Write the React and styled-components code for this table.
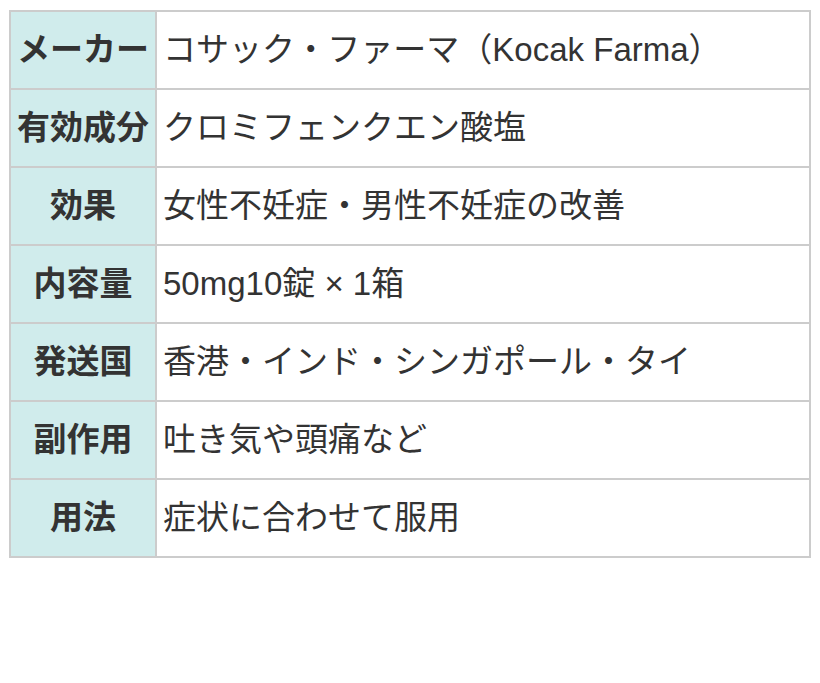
import React from 'react';
import styled, { createGlobalStyle } from 'styled-components';

const GlobalStyle = createGlobalStyle`
  body {
    margin: 0;
    background: #fff;
    font-family: "Liberation Sans", "Noto Sans CJK JP", sans-serif;
    color: #333;
  }
`;

const Page = styled.div`
  padding: 10px 8px 0 9px;
`;

const Table = styled.table`
  width: 802px;
  border-collapse: collapse;
  table-layout: fixed;
  font-size: 33px;
  line-height: 48px;
`;

const HeadCell = styled.th`
  width: 132px;
  padding: 14px 6px;
  background: #d0ecec;
  border: 2px solid #ccc;
  font-weight: bold;
  text-align: center;
  white-space: nowrap;
  color: #333;
`;

const DataCell = styled.td`
  padding: 14px 6px;
  border: 2px solid #ccc;
  text-align: left;
  white-space: nowrap;
`;

const rows = [
  ['メーカー', 'コサック・ファーマ（Kocak Farma）'],
  ['有効成分', 'クロミフェンクエン酸塩'],
  ['効果', '女性不妊症・男性不妊症の改善'],
  ['内容量', '50mg10錠 × 1箱'],
  ['発送国', '香港・インド・シンガポール・タイ'],
  ['副作用', '吐き気や頭痛など'],
  ['用法', '症状に合わせて服用'],
];

export default function App() {
  return (
    <Page>
      <GlobalStyle />
      <Table>
        <tbody>
          {rows.map(([label, value]) => (
            <tr key={label}>
              <HeadCell>{label}</HeadCell>
              <DataCell>{value}</DataCell>
            </tr>
          ))}
        </tbody>
      </Table>
    </Page>
  );
}
